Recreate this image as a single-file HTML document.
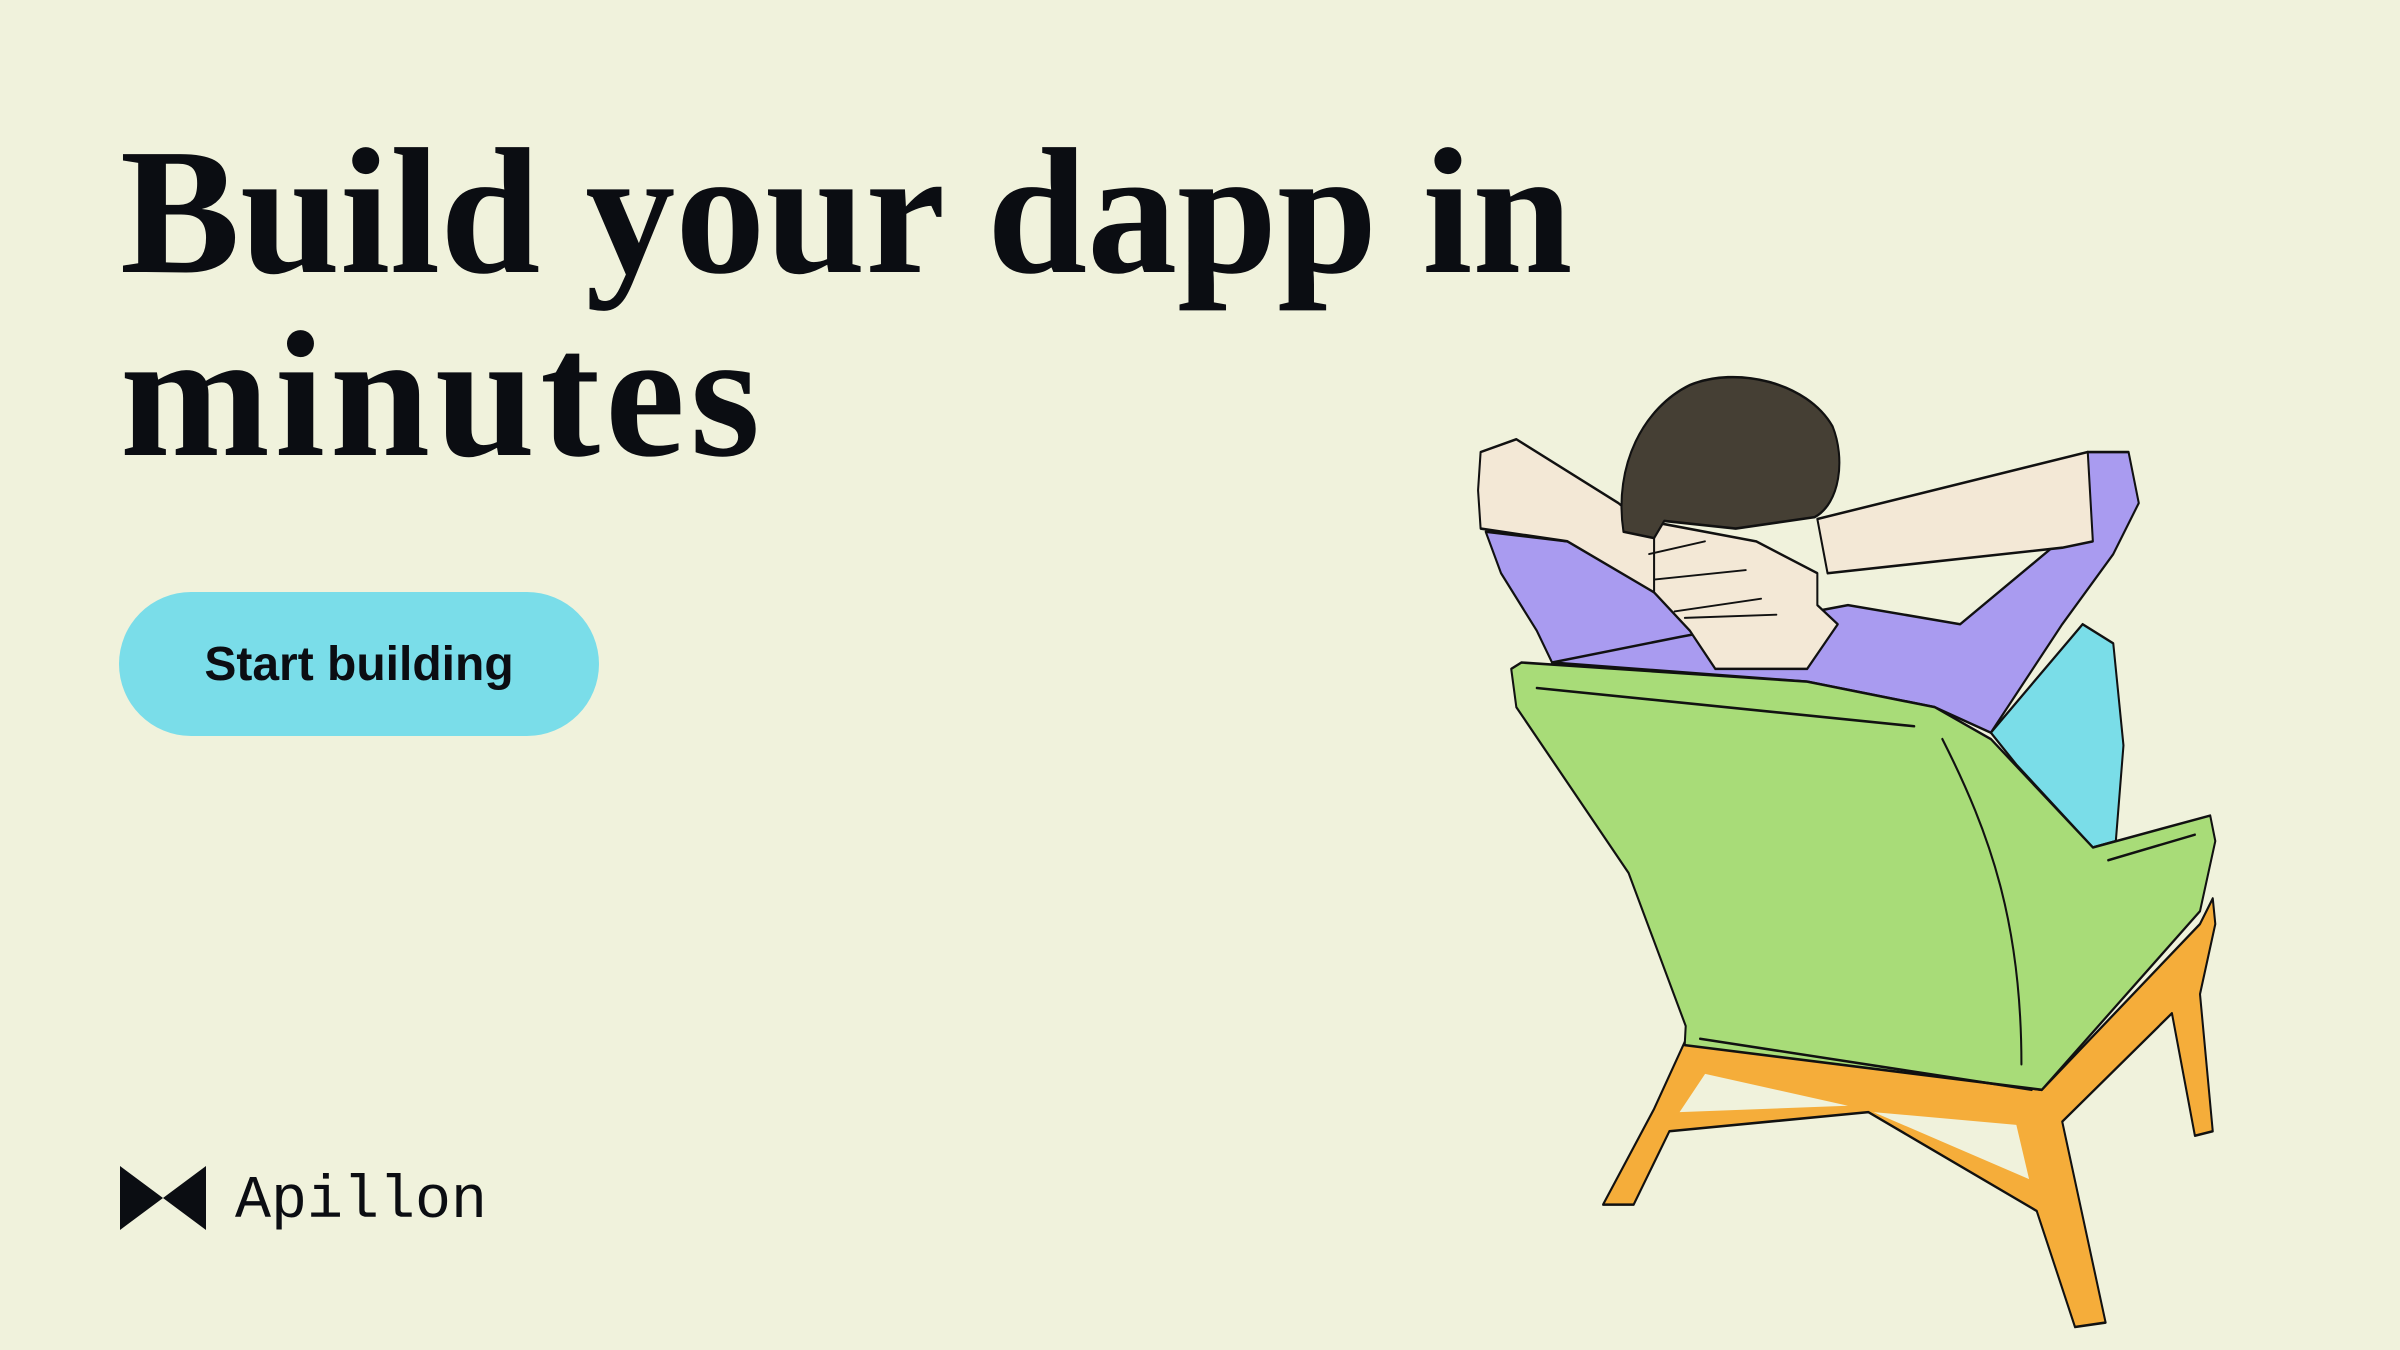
<!DOCTYPE html>
<html><head><meta charset="utf-8"><style>
html,body{margin:0;padding:0}
body{width:2400px;height:1350px;background:#f0f2dc;position:relative;overflow:hidden}
h1{position:absolute;left:120px;top:120px;margin:0;font-family:"Liberation Serif",serif;font-weight:bold;font-size:180px;line-height:183px;color:#0b0d12;letter-spacing:0px}
.btn{position:absolute;left:119px;top:592px;width:480px;height:144px;border-radius:72px;background:#7adde9;font-family:"Liberation Sans",sans-serif;font-weight:bold;font-size:48px;color:#0b0d12;display:flex;align-items:center;justify-content:center}
.logo{position:absolute;left:120px;top:1166px}
.lt{position:absolute;left:235px;top:1162px;font-family:"Liberation Mono",monospace;font-size:60px;line-height:80px;color:#0b0d12}
</style></head><body>
<h1>Build your dapp in<br><span style="letter-spacing:5px">minutes</span></h1>
<div class="btn">Start building</div>
<svg class="logo" width="86" height="64" viewBox="0 0 86 64"><path d="M0 0L43 32L86 0V64L43 32L0 64Z" fill="#0b0d12"/></svg>
<div class="lt">Apillon</div>
<svg style="position:absolute;left:1450px;top:350px" width="800" height="1000" viewBox="0 0 1568 1568" preserveAspectRatio="none">
<g stroke="#111" stroke-width="4" stroke-linejoin="round" stroke-linecap="round">
<path fill="#f5ad3a" d="M460 1085L1160 1160L1470 900L1495 860L1500 900L1470 1010L1495 1225L1460 1232L1415 1040L1200 1210L1285 1525L1225 1532L1150 1350L820 1195L430 1225L360 1340L300 1340L400 1190Z"/>
<path fill="#f0f2dc" stroke="none" d="M500 1135L780 1185L450 1195Z M830 1195L1110 1215L1135 1300Z"/>
<path fill="#7adde8" d="M1060 600L1240 430L1300 460L1320 620L1305 770L1260 780L1110 650Z"/>
<path fill="#a99bf0" d="M70 285L230 300L430 380L520 500L200 490L170 440L100 350Z"/>
<path fill="#a99bf0" d="M450 450L780 400L1000 430L1180 310L1250 160L1330 160L1350 240L1300 320L1200 430L1060 600L950 560L700 520L200 490Z"/>
<path fill="#f3e8d6" d="M60 160L130 140L330 240L420 300L400 380L230 300L60 280L55 220Z"/>
<path fill="#f3e8d6" d="M720 265L1250 160L1260 300L1200 310L740 350Z"/>
<path fill="#f3e8d6" d="M400 270L600 300L720 350L720 400L760 430L700 500L520 500L470 440L400 380Z"/>
<path fill="#453f34" d="M340 285C320 180 380 90 470 55C560 25 700 50 750 120C775 170 765 240 715 262L560 280L420 268L400 295Z"/>
<path fill="#a8dc78" d="M120 500L140 490L700 520L950 560L1060 610L1260 780L1490 730L1500 770L1470 880L1160 1160L460 1090L462 1060L350 820L130 560Z"/>
<path fill="none" d="M965 610C1060 760 1120 900 1120 1120 M170 530L910 590 M490 1080L1140 1160 M1290 800L1460 760"/>
<path fill="none" stroke-width="3" d="M390 320L500 300 M400 360L580 345 M440 410L610 390 M460 420L640 415"/>
</g>
</svg>
</body></html>
